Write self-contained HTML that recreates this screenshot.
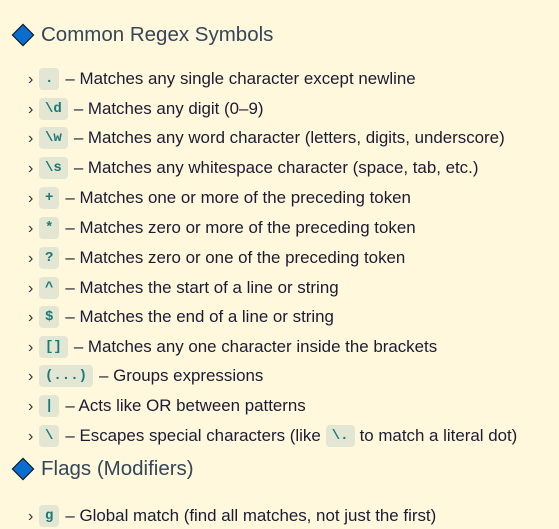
<!DOCTYPE html>
<html><head><meta charset="utf-8"><style>
body{margin:0;background:#fff8dc;width:559px;height:528px;overflow:hidden;font-family:"Liberation Sans",sans-serif;color:#1b1b33;}
h2{position:absolute;left:12px;margin:0;font-weight:normal;font-size:20.5px;color:#34465a;display:flex;align-items:center;}
h2 .d{width:14px;height:14px;background:#0a6ed1;border:1.5px solid #111;transform:rotate(45deg);margin:0 10px 0 3px;}
.it{position:absolute;left:28px;font-size:16.9px;display:flex;align-items:center;height:24px;white-space:nowrap;}
.ch{font-size:16px;width:11px;color:#333;line-height:24px;margin-top:1px;}
code{font-family:"Liberation Mono",monospace;font-weight:bold;font-size:14px;color:#1a7878;background:#e2e6d2;border-radius:4px;padding:0 6px;height:22px;line-height:22px;display:inline-block;margin-right:6px;}
.in{margin:0 5px;}
</style></head><body>
<h2 style="top:23px"><span class="d"></span>Common Regex Symbols</h2>
<div class="it" style="top:67px"><span class="ch">›</span><code>.</code>– Matches any single character except newline</div>
<div class="it" style="top:97px"><span class="ch">›</span><code>\d</code>– Matches any digit (0–9)</div>
<div class="it" style="top:126px"><span class="ch">›</span><code>\w</code>– Matches any word character (letters, digits, underscore)</div>
<div class="it" style="top:156px"><span class="ch">›</span><code>\s</code>– Matches any whitespace character (space, tab, etc.)</div>
<div class="it" style="top:186px"><span class="ch">›</span><code>+</code>– Matches one or more of the preceding token</div>
<div class="it" style="top:216px"><span class="ch">›</span><code>*</code>– Matches zero or more of the preceding token</div>
<div class="it" style="top:246px"><span class="ch">›</span><code>?</code>– Matches zero or one of the preceding token</div>
<div class="it" style="top:276px"><span class="ch">›</span><code>^</code>– Matches the start of a line or string</div>
<div class="it" style="top:305px"><span class="ch">›</span><code>$</code>– Matches the end of a line or string</div>
<div class="it" style="top:335px"><span class="ch">›</span><code>[]</code>– Matches any one character inside the brackets</div>
<div class="it" style="top:364px"><span class="ch">›</span><code>(...)</code>– Groups expressions</div>
<div class="it" style="top:394px"><span class="ch">›</span><code>|</code>– Acts like OR between patterns</div>
<div class="it" style="top:424px"><span class="ch">›</span><code>\</code>– Escapes special characters (like <code class="in">\.</code>to match a literal dot)</div>
<h2 style="top:457px"><span class="d"></span>Flags (Modifiers)</h2>
<div class="it" style="top:504px"><span class="ch">›</span><code>g</code>– Global match (find all matches, not just the first)</div>
</body></html>
